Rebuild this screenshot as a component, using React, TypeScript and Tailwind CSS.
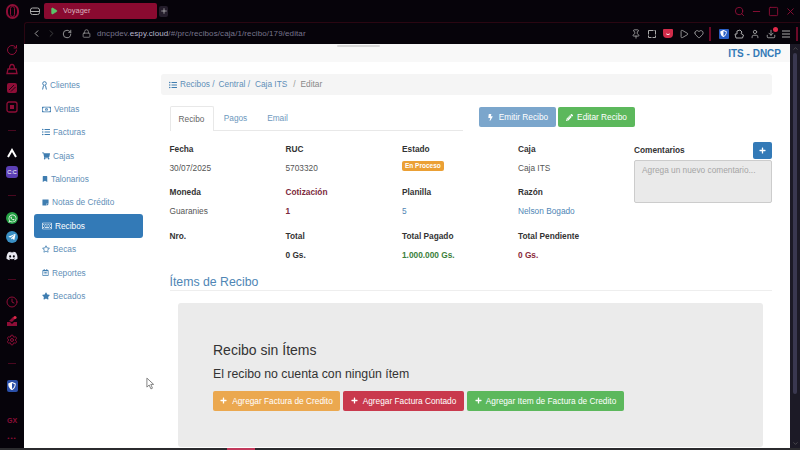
import type { ReactNode } from 'react';
import {
  ChevronLeft,
  ChevronRight,
  ChevronUp,
  ChevronDown,
  RotateCw,
  Lock,
  Pin,
  Play,
  Heart,
  User,
  Download,
  Search,
  Minus,
  Square,
  X,
  Plus,
  Clock,
  Settings,
} from 'lucide-react';
import {
  FaRegMoneyBillAlt,
  FaListUl,
  FaShoppingCart,
  FaBookmark,
  FaStickyNote,
  FaRegKeyboard,
  FaRegStar,
  FaRegCalendarAlt,
  FaStar,
  FaWhatsapp,
  FaTelegramPlane,
  FaDiscord,
  FaBolt,
  FaPencilAlt,
  FaPlus,
  FaShieldAlt,
} from 'react-icons/fa';

function RibbonIcon({ className }: { className?: string }) {
  return (
    <svg viewBox="0 0 5 9" width="5" height="9" className={className} fill="none" stroke="currentColor" strokeWidth="1">
      <circle cx="2.5" cy="2.5" r="1.8" />
      <path d="M1.5 4.5 L0.6 8.5 M3.5 4.5 L4.4 8.5" />
    </svg>
  );
}

const navItems = [
  { icon: RibbonIcon, label: 'Clientes', size: 5 },
  { icon: FaRegMoneyBillAlt, label: 'Ventas', size: 9 },
  { icon: FaListUl, label: 'Facturas', size: 8 },
  { icon: FaShoppingCart, label: 'Cajas', size: 8 },
  { icon: FaBookmark, label: 'Talonarios', size: 6 },
  { icon: FaStickyNote, label: 'Notas de Crédito', size: 7 },
  { icon: FaRegKeyboard, label: 'Recibos', size: 10, active: true },
  { icon: FaRegStar, label: 'Becas', size: 8 },
  { icon: FaRegCalendarAlt, label: 'Reportes', size: 7 },
  { icon: FaStar, label: 'Becados', size: 8 },
];

function Field({ label, labelClass, children }: { label: string; labelClass?: string; children: ReactNode }) {
  return (
    <div className="h-[43.3px]">
      <div className={`h-[19px] text-[8.3px] leading-[14px] font-bold ${labelClass ?? 'text-[#333]'}`}>{label}</div>
      <div className="text-[8.3px] leading-[14px]">{children}</div>
    </div>
  );
}

function RailDash() {
  return <div className="my-[16.5px] h-px w-[8px] bg-[#4a0820]" />;
}

function BagIcon() {
  return (
    <svg viewBox="0 0 12 12" width="12" height="12" fill="none" stroke="currentColor" strokeWidth="1.3">
      <path d="M2 6 L10 6 L11 10.5 L1 10.5 Z" />
      <path d="M3.5 6 C3.5 2 4.5 1.5 6 1.5 C7.5 1.5 8.5 2 8.5 6" />
    </svg>
  );
}

function StripedIcon() {
  return (
    <svg viewBox="0 0 12 12" width="12" height="12" fill="currentColor">
      <rect x="1" y="1" width="10" height="10" rx="2" />
      <path d="M3 8 L8 3 M5 9.5 L9.5 5" stroke="#06030a" strokeWidth="0.8" />
    </svg>
  );
}

function BoxedIcon() {
  return (
    <svg viewBox="0 0 12 12" width="12" height="12" fill="none" stroke="currentColor" strokeWidth="1.3">
      <rect x="1" y="1" width="10" height="10" rx="2" />
      <rect x="4" y="4" width="4" height="4" fill="currentColor" stroke="none" />
    </svg>
  );
}

function InboxArrowIcon() {
  return (
    <svg viewBox="0 0 12 12" width="12" height="12" fill="currentColor">
      <path d="M1 7 L4 7 L6 9 L8 7 L11 7 L11 11 L1 11 Z" />
      <path d="M3 6 L7 2 L9 4 L6 7 Z" />
      <circle cx="9" cy="2.5" r="1.6" fill="#e02a4a" />
    </svg>
  );
}

function Rail() {
  return (
    <aside className="flex w-[24px] shrink-0 flex-col items-center text-[#8e0e37]">
      <div className="flex h-[11px] items-center">
        <RotateCw size={12} />
      </div>
      <div className="mt-[8px] flex flex-col items-center gap-[7px]">
        <BagIcon />
        <StripedIcon />
        <BoxedIcon />
      </div>
      <RailDash />
      <div className="flex flex-col items-center gap-[7px]">
        <svg viewBox="0 0 12 12" width="12" height="12" fill="none" stroke="#fff" strokeWidth="2">
          <path d="M2 10 L6 3 L10 10" />
        </svg>
        <div className="flex h-[12px] w-[12px] items-center justify-center rounded-[3px] bg-[#5b3fb5] text-[5.5px] text-white">C:C</div>
      </div>
      <RailDash />
      <div className="flex flex-col items-center gap-[7px]">
        <div className="flex h-[12px] w-[12px] items-center justify-center rounded-full bg-[#25a244] text-white">
          <FaWhatsapp size={9} />
        </div>
        <div className="flex h-[12px] w-[12px] items-center justify-center rounded-full bg-[#3a8fc4] text-white">
          <FaTelegramPlane size={8} />
        </div>
        <FaDiscord size={12} className="text-[#e8e8f0]" />
      </div>
      <RailDash />
      <div className="flex flex-col items-center gap-[7px]">
        <Clock size={12} />
        <InboxArrowIcon />
        <Settings size={12} />
      </div>
      <RailDash />
      <div className="flex h-[12px] w-[11px] items-center justify-center rounded-[2px] bg-[#2a4fa8] text-white">
        <FaShieldAlt size={8} />
      </div>
      <div className="mt-[24px] text-[7px] leading-[10px] font-bold">GX</div>
      <div className="mt-[9px] text-[6px] leading-none font-bold tracking-[1px]">•••</div>
    </aside>
  );
}

function Sidebar() {
  return (
    <nav className="flex w-[137px] shrink-0 flex-col pt-[10px] pl-[10px]">
      {navItems.map((item) => (
        <a
          key={item.label}
          className={`flex h-[23.4px] w-[109px] items-center gap-[3px] rounded-[3px] pl-[8px] text-[8.3px] ${
            item.active ? 'bg-[#337ab7] text-white' : 'text-[#5f8fb8]'
          }`}
        >
          {item.icon === RibbonIcon ? (
            <RibbonIcon className="text-[#3f7db0]" />
          ) : (
            <item.icon size={item.size} className={`shrink-0 ${item.active ? 'text-white' : 'text-[#3f7db0]'}`} />
          )}
          {item.label}
        </a>
      ))}
    </nav>
  );
}

function ActionButton({ color, icon, children }: { color: string; icon: ReactNode; children: ReactNode }) {
  return (
    <button className={`flex h-[20px] shrink-0 items-center justify-center gap-[3px] rounded-[2px] text-[8.3px] whitespace-nowrap text-white ${color}`}>
      {icon}
      {children}
    </button>
  );
}

function InvoiceDetails() {
  return (
    <div className="grid w-[464.5px] grid-cols-[116px_116.5px_116px_116px]">
      <Field label="Fecha"><span className="text-[#555]">30/07/2025</span></Field>
      <Field label="RUC"><span className="text-[#555]">5703320</span></Field>
      <Field label="Estado">
        <span className="inline-block h-[10px] rounded-[2px] bg-[#eba035] px-[3px] align-top text-[6.5px] leading-[10px] font-bold text-white">En Proceso</span>
      </Field>
      <Field label="Caja"><span className="text-[#555]">Caja ITS</span></Field>
      <Field label="Moneda"><span className="text-[#555]">Guaranies</span></Field>
      <Field label="Cotización" labelClass="text-[#7d2a3c]"><span className="font-bold text-[#7d2a3c]">1</span></Field>
      <Field label="Planilla"><span className="text-[#4f86b5]">5</span></Field>
      <Field label="Razón"><span className="text-[#4f86b5]">Nelson Bogado</span></Field>
      <Field label="Nro."><span /></Field>
      <Field label="Total"><span className="font-bold text-[#333]">0 Gs.</span></Field>
      <Field label="Total Pagado"><span className="font-bold text-[#3c803c]">1.000.000 Gs.</span></Field>
      <Field label="Total Pendiente"><span className="font-bold text-[#8a2a3a]">0 Gs.</span></Field>
    </div>
  );
}

function Comments() {
  return (
    <div className="w-[138px]">
      <div className="flex h-[17px] items-center justify-between">
        <span className="text-[8.3px] font-bold text-[#333]">Comentarios</span>
        <button className="flex h-[17px] w-[19px] items-center justify-center rounded-[2px] bg-[#337ab7] text-white">
          <FaPlus size={7} />
        </button>
      </div>
      <div className="mt-px h-[43px] rounded-[2px] border border-[#ccc] bg-[#eaeaea] px-[7px] py-[3px] text-[8.3px] leading-[12px] text-[#a5a5a5]">
        Agrega un nuevo comentario...
      </div>
    </div>
  );
}

function Main() {
  return (
    <main className="flex w-[620px] shrink-0 flex-col">
      <div className="mt-[10px] flex h-[21px] w-[611px] items-center rounded-[3px] bg-[#f5f5f5] pl-[8px] text-[8.3px] text-[#5f8fb8]">
        <FaListUl size={8} className="mr-[3px] text-[#3f7db0]" />
        <span>Recibos /</span>
        <span className="ml-[4px]">Central /</span>
        <span className="ml-[5px]">Caja ITS</span>
        <span className="ml-[6px] text-[#999]">/</span>
        <span className="ml-[5px] text-[#888]">Editar</span>
      </div>

      <div className="mt-[11px] flex pl-[8.5px]">
        <div className="flex h-[25px] w-[293px] border-b border-[#e8e8e8] text-[8.3px]">
          <div className="flex h-[25px] w-[44px] items-center justify-center rounded-t-[2px] border border-b-0 border-[#e8e8e8] bg-white text-[#666]">Recibo</div>
          <div className="flex w-[44px] items-center justify-center text-[#6d98bd]">Pagos</div>
          <div className="flex w-[40px] items-center justify-center text-[#6d98bd]">Email</div>
        </div>
        <div className="ml-[16.5px] flex h-[21px] items-start gap-[2px] pt-px">
          <ActionButton color="w-[77px] bg-[#7ba6cc]" icon={<FaBolt size={7} className="mr-[2px] shrink-0" />}>Emitir Recibo</ActionButton>
          <ActionButton color="w-[77px] bg-[#5cb85c]" icon={<FaPencilAlt size={7} className="mr-[1px] shrink-0" />}>Editar Recibo</ActionButton>
        </div>
      </div>

      <div className="mt-[11px] flex items-start pl-[8.5px]">
        <InvoiceDetails />
        <Comments />
      </div>

      <div className="mt-[2px] ml-[8.5px] w-[602px] border-b border-[#eee] text-[12.3px] leading-[16px] text-[#4f86b5]">Ítems de Recibo</div>

      <div className="mt-[12px] ml-[17px] h-[144px] w-[585px] rounded-[3px] bg-[#ebebeb] pt-[38px] pl-[35px]">
        <h1 className="text-[14px] leading-[18px] text-[#333]">Recibo sin Ítems</h1>
        <p className="mt-[7px] text-[12.3px] leading-[16px] text-[#333]">El recibo no cuenta con ningún ítem</p>
        <div className="mt-[9px] flex gap-[3px]">
          <ActionButton color="w-[127px] bg-[#eba84f]" icon={<FaPlus size={7} className="mr-[2px] shrink-0" />}>Agregar Factura de Credito</ActionButton>
          <ActionButton color="w-[121px] bg-[#c9394d]" icon={<FaPlus size={7} className="mr-[2px] shrink-0" />}>Agregar Factura Contado</ActionButton>
          <ActionButton color="w-[157px] bg-[#5cb85c]" icon={<FaPlus size={7} className="mr-[1px] shrink-0" />}>Agregar Item de Factura de Credito</ActionButton>
        </div>
      </div>
    </main>
  );
}

export default function App() {
  return (
    <div className="relative flex h-[450px] w-[800px] flex-col overflow-hidden bg-[#06030a] font-['Liberation_Sans',sans-serif]">
      {/* tab strip */}
      <div className="flex h-[22px] shrink-0 items-center text-[#8e0e37]">
        <div className="flex w-[24px] justify-center">
          <div className="flex h-[15px] w-[13px] items-center justify-center rounded-full border-2 border-[#8e0e37]">
            <div className="h-[11px] w-[5px] rounded-full border border-[#8e0e37]" />
          </div>
        </div>
        <svg viewBox="0 0 10 9" width="10" height="9" className="ml-[6px] text-[#aaa]" fill="none" stroke="currentColor" strokeWidth="1">
          <rect x="0.5" y="1" width="9" height="6.5" rx="2" />
          <path d="M0.5 4.5 H9.5" />
        </svg>
        <div className="ml-[4px] flex h-[16px] w-[113px] items-center gap-[5px] rounded-[2px] bg-[#8a0a30] pl-[6px] text-[7.5px] text-[#d9b0bd]">
          <Play size={8} className="fill-[#5cc46a] text-[#5cc46a]" />
          Voyager
        </div>
        <div className="ml-[2px] flex h-[11px] w-[9px] items-center justify-center rounded-[2px] bg-[#241d2b] text-[#ccc]">
          <Plus size={8} />
        </div>
        <div className="ml-auto flex items-center gap-[6px] pr-[4.5px]">
          <Search size={11} />
          <Minus size={11} />
          <Square size={11} />
          <X size={11} />
        </div>
      </div>

      {/* address bar */}
      <div className="ml-[24px] flex h-[22px] shrink-0 items-center rounded-tl-[3px] border-t border-l border-[#2a0612] pl-[6px] text-[#aaa]">
        <ChevronLeft size={11} />
        <ChevronRight size={11} className="ml-[4px] text-[#444]" />
        <RotateCw size={10} className="ml-[5px]" />
        <Lock size={9} className="ml-[10px] text-[#999]" />
        <div className="ml-[6px] text-[8px] tracking-[0.1px] text-[#77758c]">
          dncpdev.<span className="text-[#b8b6cc]">espy.cloud</span>/#/prc/recibos/caja/1/recibo/179/editar
        </div>
        <div className="ml-auto flex items-center gap-[5.7px] pr-[2px]">
          <Pin size={10} />
          <svg viewBox="0 0 10 10" width="10" height="10" fill="none" stroke="currentColor" strokeWidth="1">
            <rect x="1.5" y="1.5" width="7" height="7" strokeDasharray="5 1" />
          </svg>
          <div className="flex h-[9px] w-[10px] items-center justify-center rounded-t-[1px] rounded-b-[4px] bg-[#d12c4a]">
            <div className="h-[2px] w-[4px] rounded-b-full border-b border-[#fff]" />
          </div>
          <Play size={10} />
          <Heart size={10} />
          <div className="-ml-[1px] h-[14px] w-[2px] bg-[#6b0a28]" />
          <div className="ml-[2px] flex h-[10px] w-[10px] items-center justify-center rounded-[1px] bg-[#2a5fc4] text-white">
            <FaShieldAlt size={7} />
          </div>
          <svg viewBox="0 0 10 10" width="10" height="10" fill="none" stroke="currentColor" strokeWidth="1">
            <path d="M1 5 L3 5 L3 2 L6 1 L8 3 L7 4.5 L9.5 6 L8.5 9 L2 9 Z" />
          </svg>
          <User size={10} />
          <div className="relative">
            <Download size={10} />
            <span className="absolute -top-[2px] -right-[2px] h-[5px] w-[5px] rounded-full bg-[#e02a4a]" />
          </div>
          <svg viewBox="0 0 10 10" width="10" height="10" stroke="currentColor" strokeWidth="1">
            <path d="M1 2 H9 M1 5 H9 M1 8 H9" />
          </svg>
          <div className="-ml-[1px] h-[14px] w-[2px] bg-[#6b0a28]" />
        </div>
      </div>

      <div className="flex h-[404px] shrink-0">
        <Rail />
        <div className="relative flex h-[404px] w-[766px] shrink-0 flex-col bg-white">
          <div className="absolute top-px left-[313px] h-[2px] w-[43px] rounded-full bg-[#d8d8d8]" />
          <div className="flex h-[18px] shrink-0 items-center justify-end bg-[#f8f8f8] pr-[9px] text-[10px] font-bold text-[#337ab7]">
            ITS - DNCP
          </div>
          <div className="flex min-h-0 flex-1 pt-[2px]">
            <Sidebar />
            <Main />
          </div>
          {/* mouse pointer */}
          <svg viewBox="0 0 10 14" width="9" height="13" className="absolute top-[333px] left-[122px]" fill="#fff" stroke="#777" strokeWidth="1">
            <path d="M1 1 L1 11 L3.5 8.7 L5.5 13 L7.2 12.2 L5.3 8 L8.5 8 Z" />
          </svg>
        </div>
        <div className="flex w-[10px] shrink-0 flex-col items-center bg-[#1c1a26] text-[#666]">
          <ChevronUp size={7} className="mt-px" />
          <div className="mt-[1px] h-[341px] w-[4px] rounded-full bg-[#3a3850]" />
          <ChevronDown size={7} className="mt-auto mb-px" />
        </div>
      </div>

      {/* bottom edge of the capture */}
      <div className="flex h-[2px] shrink-0 bg-[#2b2b2e]">
        <div className="ml-[227px] h-[2px] w-[28px] bg-[#c23a5c]" />
      </div>
    </div>
  );
}
